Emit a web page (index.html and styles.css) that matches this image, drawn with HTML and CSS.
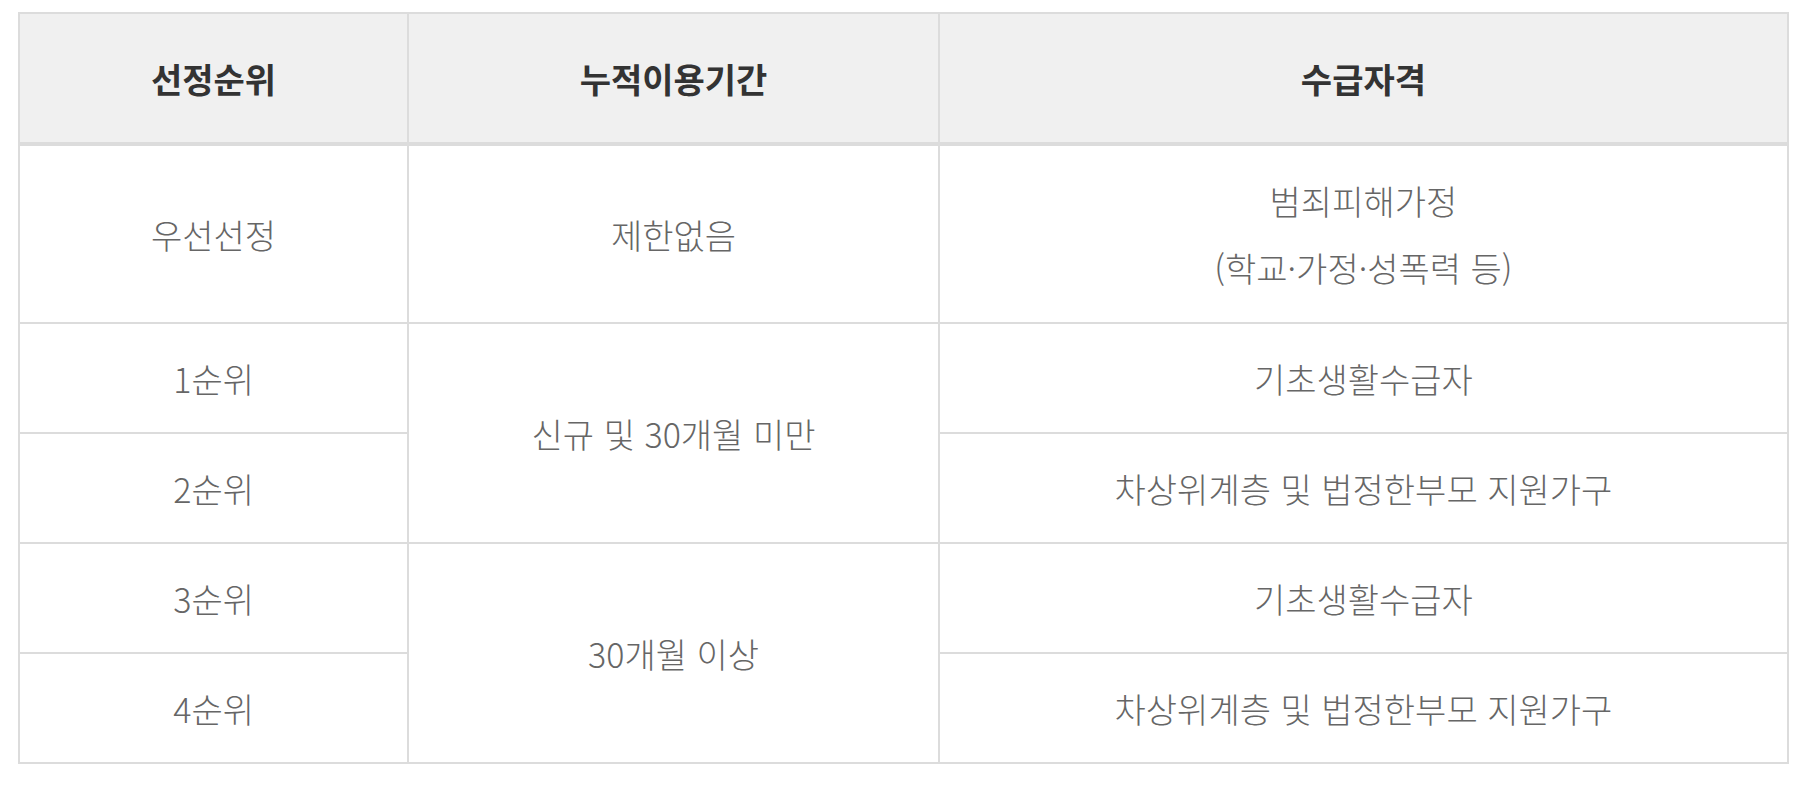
FILE: index.html
```html
<!DOCTYPE html>
<html lang="ko">
<head>
<meta charset="utf-8">
<title>선정순위</title>
<link rel="stylesheet" href="styles.css">
</head>
<body>
<div class="wrap">
<table class="tbl">
  <colgroup>
    <col class="c1">
    <col class="c2">
    <col class="c3">
  </colgroup>
  <thead>
    <tr>
      <th>선정순위</th>
      <th>누적이용기간</th>
      <th>수급자격</th>
    </tr>
  </thead>
  <tbody>
    <tr>
      <td>우선선정</td>
      <td>제한없음</td>
      <td>범죄피해가정<br>(학교·가정·성폭력 등)</td>
    </tr>
    <tr>
      <td>1순위</td>
      <td rowspan="2">신규 및 30개월 미만</td>
      <td>기초생활수급자</td>
    </tr>
    <tr>
      <td>2순위</td>
      <td>차상위계층 및 법정한부모 지원가구</td>
    </tr>
    <tr>
      <td>3순위</td>
      <td rowspan="2">30개월 이상</td>
      <td>기초생활수급자</td>
    </tr>
    <tr>
      <td>4순위</td>
      <td>차상위계층 및 법정한부모 지원가구</td>
    </tr>
  </tbody>
</table>
</div>
</body>
</html>
```

FILE: styles.css
```css
html, body {
  margin: 0;
  padding: 0;
  background: #fff;
}
.wrap {
  padding: 12px 17px 0 18px;
}
.tbl {
  width: 100%;
  border-collapse: collapse;
  table-layout: fixed;
  font-family: "Noto Sans CJK KR", "Noto Sans", sans-serif;
  font-size: 34px;
  line-height: 67px;
  text-align: center;
}
.c1 { width: 22%; }
.c2 { width: 30%; }
.c3 { width: 48%; }
.tbl th,
.tbl td {
  border: 2px solid #dcdcdc;
  vertical-align: middle;
  padding: 0 10px;
}
.tbl th {
  background: #f0f0f0;
  color: #333;
  font-weight: 700;
  height: 128px;
  border-bottom: 4px solid #dcdcdc;
}
.tbl td {
  color: #666;
  font-weight: 300;
  height: 108px;
  padding-top: 0;
  padding-bottom: 0;
}
.tbl tbody tr:first-child td {
  height: 176px;
}
```
